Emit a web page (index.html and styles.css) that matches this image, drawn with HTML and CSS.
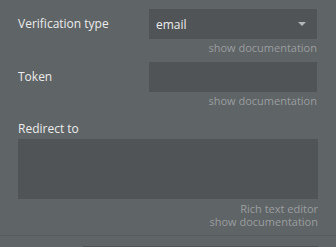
FILE: index.html
```html
<!DOCTYPE html>
<html>
<head>
<meta charset="utf-8">
<link rel="stylesheet" href="styles.css">
</head>
<body>
<div class="panel">
  <div class="row">
    <div class="label">Verification type</div>
    <div class="select">
      <span>email</span>
      <svg class="caret" width="8" height="4" viewBox="0 0 8 4"><path d="M0 0H8L4 4Z" fill="#b3b6b8"/></svg>
    </div>
  </div>
  <div class="doc">show documentation</div>
  <div class="row row2">
    <div class="label">Token</div>
    <div class="input"></div>
  </div>
  <div class="doc">show documentation</div>
  <div class="block">
    <div class="label">Redirect to</div>
    <div class="textarea"></div>
    <div class="doc doc-rich">Rich text editor<br>show documentation</div>
  </div>
</div>
<div class="sep"></div>
<div class="next"><div class="next-input"></div></div>
</body>
</html>
```
FILE: styles.css
```css
html, body {
  margin: 0;
  padding: 0;
  background: #5f6466;
  width: 336px;
  height: 247px;
  overflow: hidden;
  font-family: "Open Sans", "Noto Sans", sans-serif;
}
.panel {
  padding: 9px 18px 0 18px;
  width: 300px;
}
.row {
  display: flex;
  align-items: center;
  justify-content: space-between;
}
.row2 {
  margin-top: 7px;
}
.label {
  color: #ececec;
  font-size: 12px;
  line-height: 16px;
}
.select, .input {
  width: 168px;
  height: 30px;
  background: #505457;
  box-sizing: border-box;
  margin-right: 1px;
}
.select {
  display: flex;
  align-items: center;
  justify-content: space-between;
  padding: 0 11px 0 7px;
  color: #ececec;
  font-size: 12px;
}
.doc {
  color: #9b9ea0;
  font-size: 11px;
  line-height: 14px;
  text-align: right;
  margin-top: 2px;
  margin-right: 1px;
}
.block {
  margin-top: 13px;
}
.textarea {
  margin-top: 2px;
  height: 60px;
  background: #505457;
}
.doc-rich {
  margin-top: 3px;
  line-height: 13px;
  margin-right: 0;
}
.sep {
  margin-top: 7px;
  height: 1px;
  background: #585c5f;
}
.next {
  padding: 10px 18px 0 83px;
}
.next-input {
  height: 4px;
  background: #4e5255;
}
```
